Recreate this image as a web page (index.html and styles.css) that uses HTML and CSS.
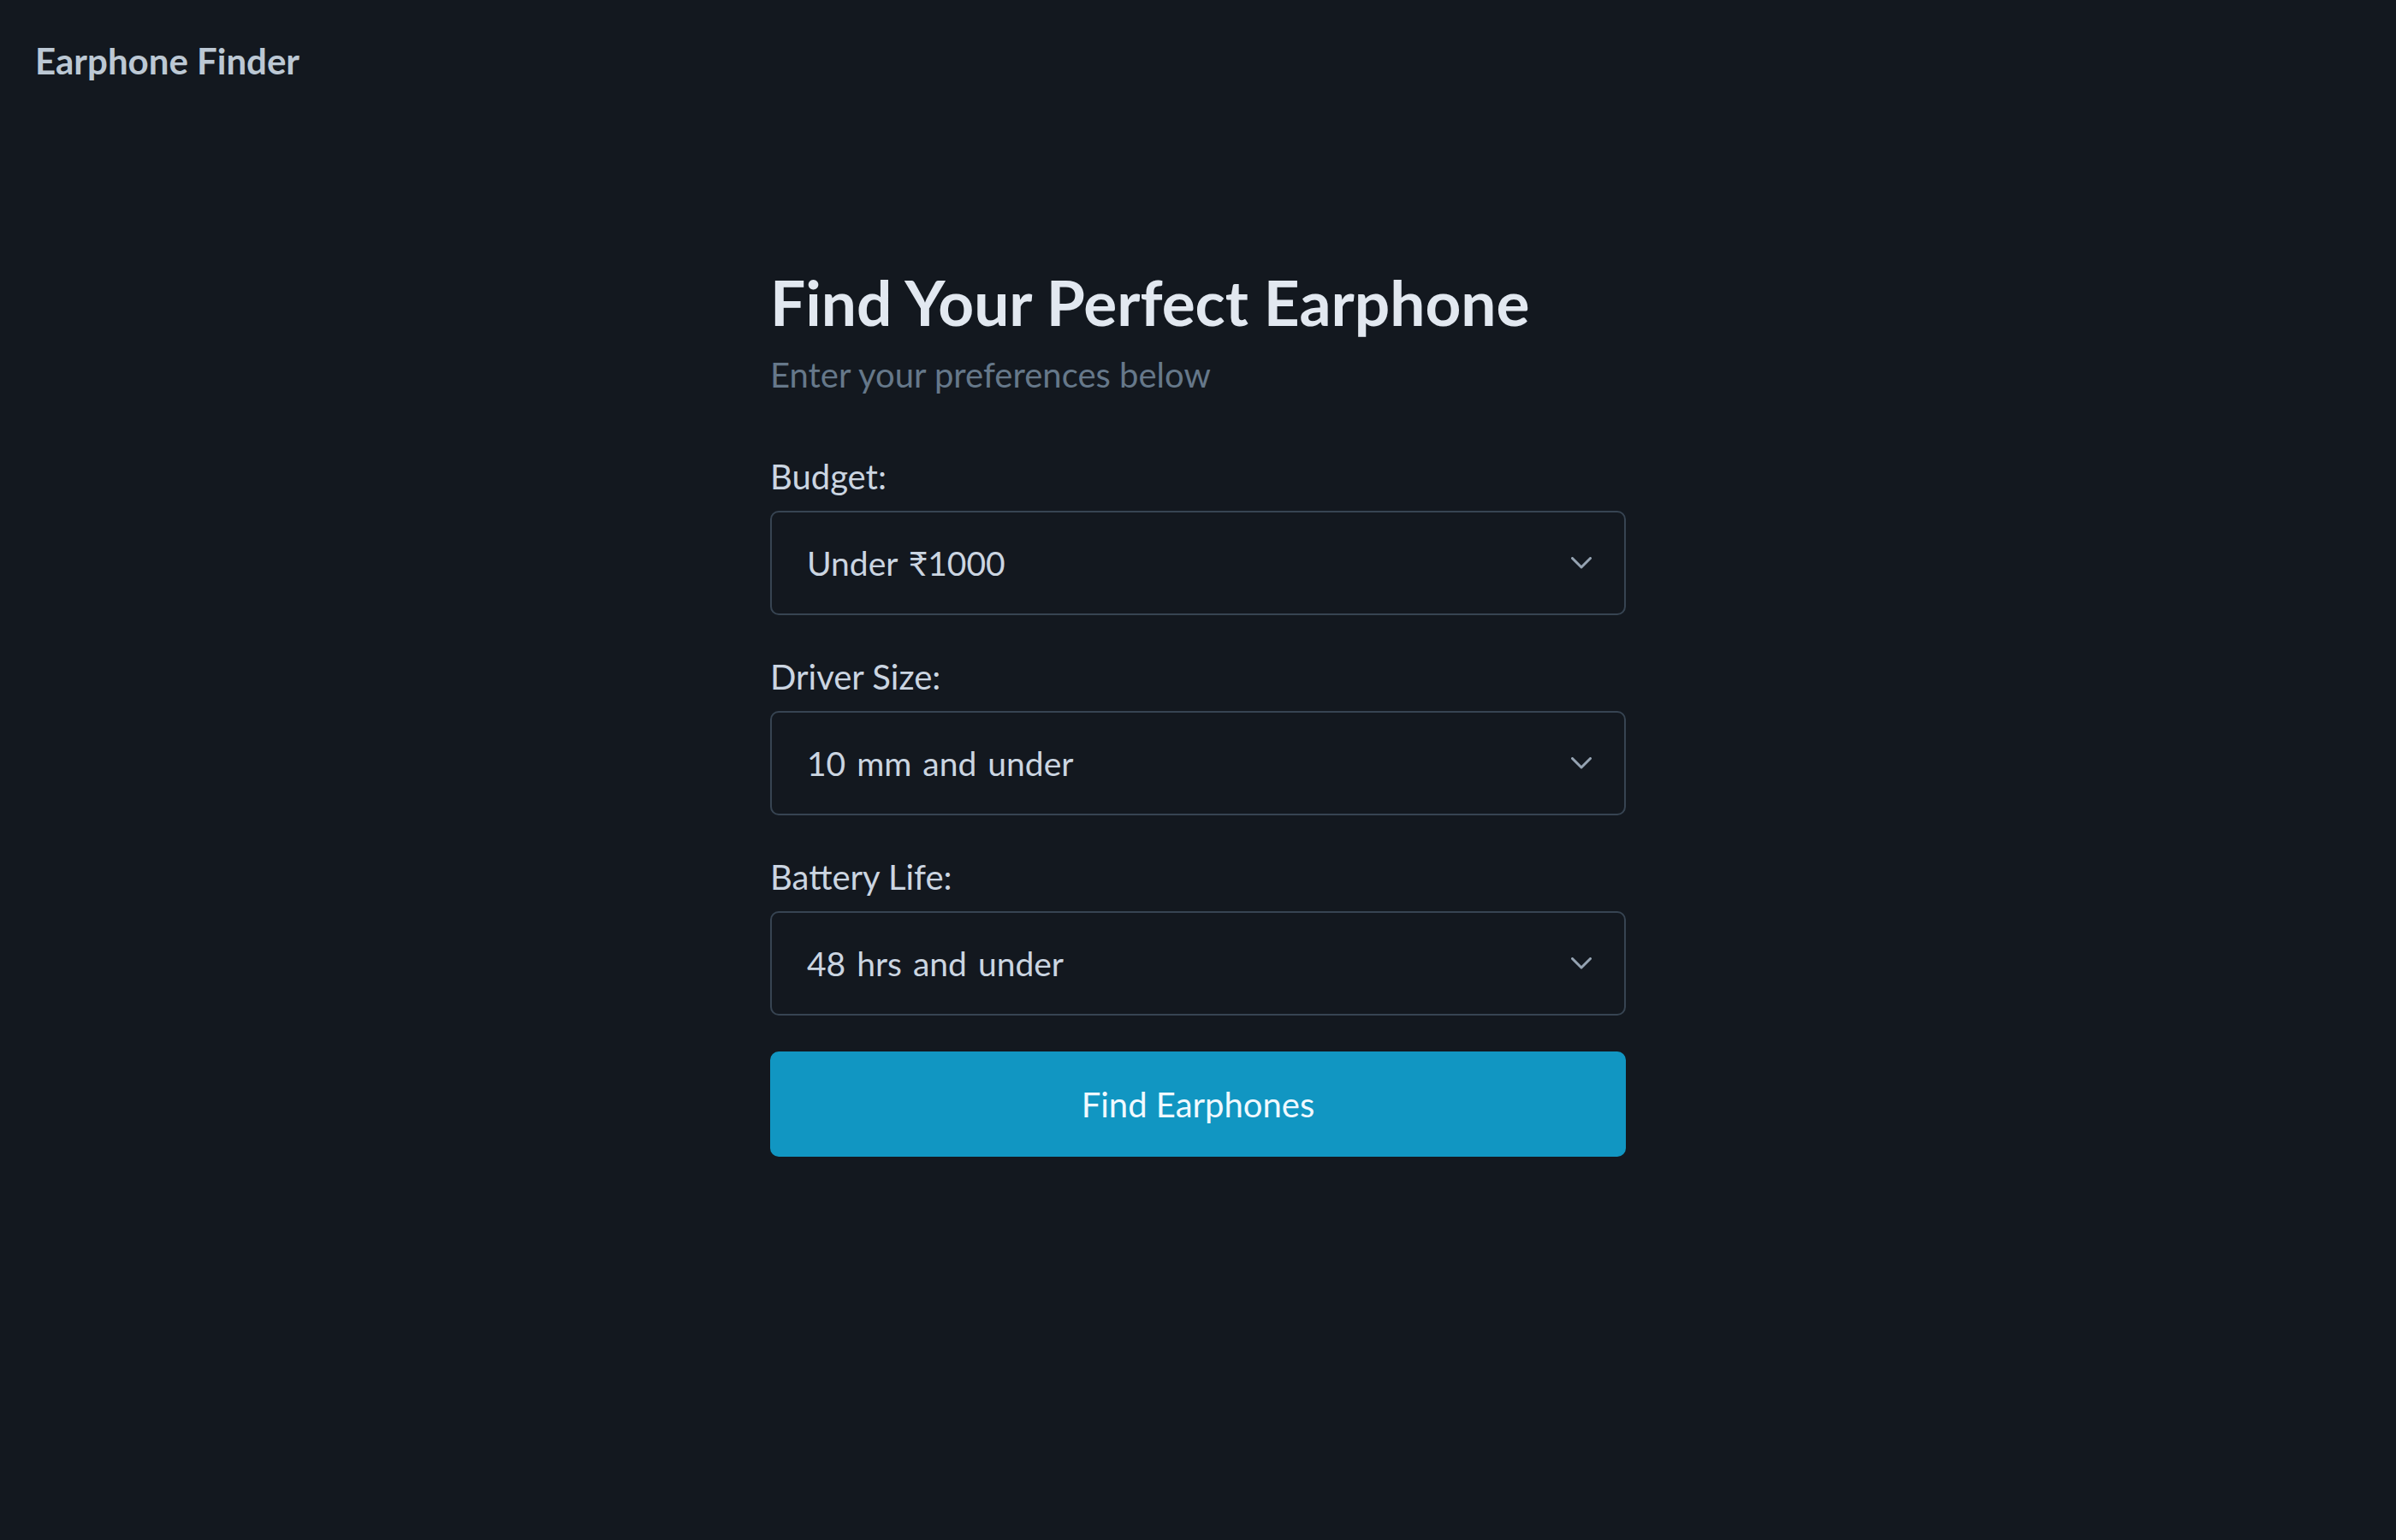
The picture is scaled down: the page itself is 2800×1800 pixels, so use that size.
FILE: index.html
```html
<!DOCTYPE html>
<html lang="en">
<head>
<meta charset="utf-8">
<title>Earphone Finder</title>
<link rel="stylesheet" href="styles.css">
</head>
<body>
<header class="topbar">
  <div class="brand">Earphone Finder</div>
</header>
<main class="finder">
  <h1 class="title">Find Your Perfect Earphone</h1>
  <p class="subtitle">Enter your preferences below</p>
  <form class="form">
    <div class="field">
      <label class="label" for="budget">Budget:</label>
      <div class="select-wrap">
        <select class="select" id="budget">
          <option>Under ₹1000</option>
        </select>
        <svg class="chevron" width="24" height="14" viewBox="0 0 24 14"><polyline points="1.5,1.5 12,12 22.5,1.5" fill="none" stroke="#95a3b2" stroke-width="3" stroke-linecap="round" stroke-linejoin="round"/></svg>
      </div>
    </div>
    <div class="field">
      <label class="label" for="driver">Driver Size:</label>
      <div class="select-wrap">
        <select class="select" id="driver">
          <option>10 mm and under</option>
        </select>
        <svg class="chevron" width="24" height="14" viewBox="0 0 24 14"><polyline points="1.5,1.5 12,12 22.5,1.5" fill="none" stroke="#95a3b2" stroke-width="3" stroke-linecap="round" stroke-linejoin="round"/></svg>
      </div>
    </div>
    <div class="field">
      <label class="label" for="battery">Battery Life:</label>
      <div class="select-wrap">
        <select class="select" id="battery">
          <option>48 hrs and under</option>
        </select>
        <svg class="chevron" width="24" height="14" viewBox="0 0 24 14"><polyline points="1.5,1.5 12,12 22.5,1.5" fill="none" stroke="#95a3b2" stroke-width="3" stroke-linecap="round" stroke-linejoin="round"/></svg>
      </div>
    </div>
    <button type="button" class="submit">Find Earphones</button>
  </form>
</main>
</body>
</html>
```
FILE: styles.css
```css
html, body {
  margin: 0;
  padding: 0;
}
body {
  background: #13181f;
  font-family: Lato, "Open Sans", "Noto Sans", sans-serif;
  min-height: 1800px;
}
.topbar {
  padding: 41px 41px 0;
}
.brand {
  font-size: 42px;
  line-height: 60px;
  font-weight: 700;
  color: #bcc8d4;
}
.finder {
  width: 1000px;
  margin: 0 auto;
  padding-top: 209px;
}
.title {
  margin: 0;
  font-size: 73px;
  line-height: 87px;
  font-weight: 700;
  color: #e2e8f0;
}
.subtitle {
  margin: 11px 0 0;
  font-size: 40px;
  line-height: 60px;
  color: #66788a;
}
.form {
  margin-top: 59px;
  display: flex;
  flex-direction: column;
  gap: 42px;
}
.field {
  display: flex;
  flex-direction: column;
  gap: 10px;
}
.label {
  font-size: 40px;
  line-height: 60px;
  color: #cbd5e1;
}
.select-wrap {
  display: grid;
}
.select {
  grid-area: 1 / 1;
  appearance: none;
  -webkit-appearance: none;
  box-sizing: border-box;
  width: 100%;
  height: 122px;
  margin: 0;
  padding: 0 80px 0 41px;
  background: #13181f;
  border: 2px solid #374452;
  border-radius: 10px;
  color: #cbd5e1;
  font-family: inherit;
  font-size: 39px;
  word-spacing: 3px;
  outline: none;
}
.chevron {
  grid-area: 1 / 1;
  justify-self: end;
  align-self: center;
  margin-right: 40px;
  pointer-events: none;
}
.submit {
  box-sizing: border-box;
  width: 100%;
  height: 123px;
  margin: 0;
  border: 0;
  border-radius: 10px;
  background: #1196c2;
  color: #f0f9ff;
  font-family: inherit;
  font-size: 40px;
  cursor: pointer;
}
```
